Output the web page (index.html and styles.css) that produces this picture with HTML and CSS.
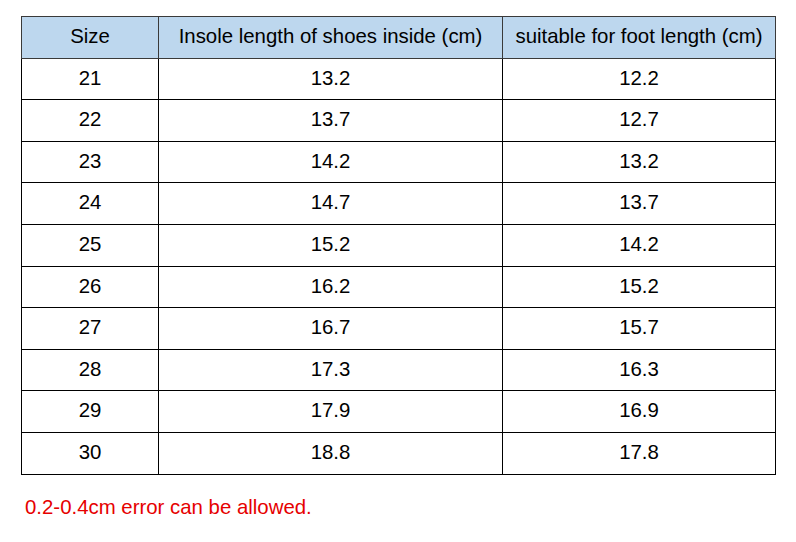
FILE: index.html
```html
<!DOCTYPE html>
<html>
<head>
<meta charset="utf-8">
<link rel="stylesheet" href="styles.css">
</head>
<body>
<div class="page">
<table class="sizes">
<thead>
<tr><th class="c1">Size</th><th class="c2">Insole length of shoes inside (cm)</th><th class="c3">suitable for foot length (cm)</th></tr>
</thead>
<tbody>
<tr><td>21</td><td>13.2</td><td>12.2</td></tr>
<tr><td>22</td><td>13.7</td><td>12.7</td></tr>
<tr><td>23</td><td>14.2</td><td>13.2</td></tr>
<tr><td>24</td><td>14.7</td><td>13.7</td></tr>
<tr><td>25</td><td>15.2</td><td>14.2</td></tr>
<tr><td>26</td><td>16.2</td><td>15.2</td></tr>
<tr><td>27</td><td>16.7</td><td>15.7</td></tr>
<tr><td>28</td><td>17.3</td><td>16.3</td></tr>
<tr><td>29</td><td>17.9</td><td>16.9</td></tr>
<tr><td>30</td><td>18.8</td><td>17.8</td></tr>
</tbody>
</table>
<p class="note">0.2-0.4cm error can be allowed.</p>
</div>
</body>
</html>
```
FILE: styles.css
```css
html, body {
  margin: 0;
  padding: 0;
  background: #ffffff;
}
.page {
  padding: 16px 0 0 21px;
  font-family: "Liberation Sans", Arial, sans-serif;
  color: #000;
}
.sizes {
  border-collapse: collapse;
  width: 755px;
  table-layout: fixed;
  font-size: 20.4px;
  line-height: 1;
}
.sizes th, .sizes td {
  border: 1px solid #000;
  text-align: center;
  padding: 0 0 2px 0;
  height: 38.6px;
  font-weight: normal;
}
.sizes th {
  background: #bdd7ee;
  border-color: #3a3a3a;
}
.c1 { width: 136px; }
.c2 { width: 343px; }
.c3 { width: auto; }
.note {
  margin: 22px 0 0 4px;
  color: #e60000;
  font-size: 20.4px;
  line-height: 1;
}
```
